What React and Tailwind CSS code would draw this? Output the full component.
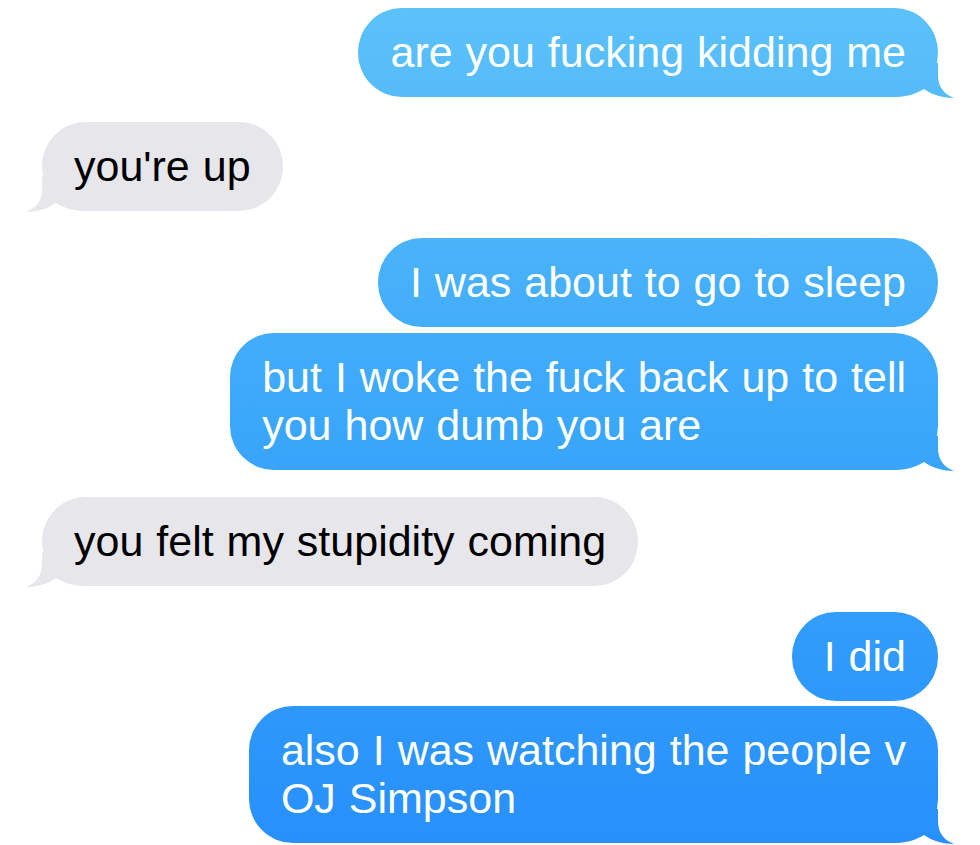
import clsx from "clsx";

const blueBg =
  "bg-fixed bg-linear-to-b from-[#5cc2f9] via-[#3ba7fa] to-[#2790fb]";
const grayBg = "bg-[#e6e6eb]";

function Tail({ me }) {
  return (
    <div
      className={clsx(
        "absolute bottom-[-1px] h-[35px] w-[62px] [clip-path:path('M0_0H44V12C44_24_50_31_60_35C50_35_38_32_30_26C22_31_12_34_0_34Z')]",
        me ? "right-[-18px]" : "left-[-18px] -scale-x-100",
        me ? blueBg : grayBg
      )}
    />
  );
}

function Bubble({ me, tail, lines, className }) {
  return (
    <div
      className={clsx(
        "relative rounded-[44px] px-[32px] pt-[20px] pb-[21px] text-[43px] leading-[48px] [word-spacing:1px] whitespace-nowrap",
        me ? "self-end text-white" : "self-start text-black",
        me ? blueBg : grayBg,
        className
      )}
    >
      {tail && <Tail me={me} />}
      <div className="relative">
        {lines.map((l, i) => (
          <div key={i}>{l}</div>
        ))}
      </div>
    </div>
  );
}

export default function App() {
  return (
    <div className="h-[845px] overflow-hidden bg-white font-['Liberation_Sans',Arial,sans-serif]">
      <div className="flex flex-col px-[42px] pt-[8px]">
        <Bubble me tail lines={["are you fucking kidding me"]} />
        <Bubble tail lines={["you're up"]} className="mt-[25px]" />
        <Bubble me lines={["I was about to go to sleep"]} className="mt-[27px]" />
        <Bubble
          me
          tail
          lines={["but I woke the fuck back up to tell", "you how dumb you are"]}
          className="mt-[6px]"
        />
        <Bubble tail lines={["you felt my stupidity coming"]} className="mt-[27px]" />
        <Bubble me lines={["I did"]} className="mt-[26px]" />
        <Bubble
          me
          tail
          lines={["also I was watching the people v", "OJ Simpson"]}
          className="mt-[5px]"
        />
      </div>
    </div>
  );
}
